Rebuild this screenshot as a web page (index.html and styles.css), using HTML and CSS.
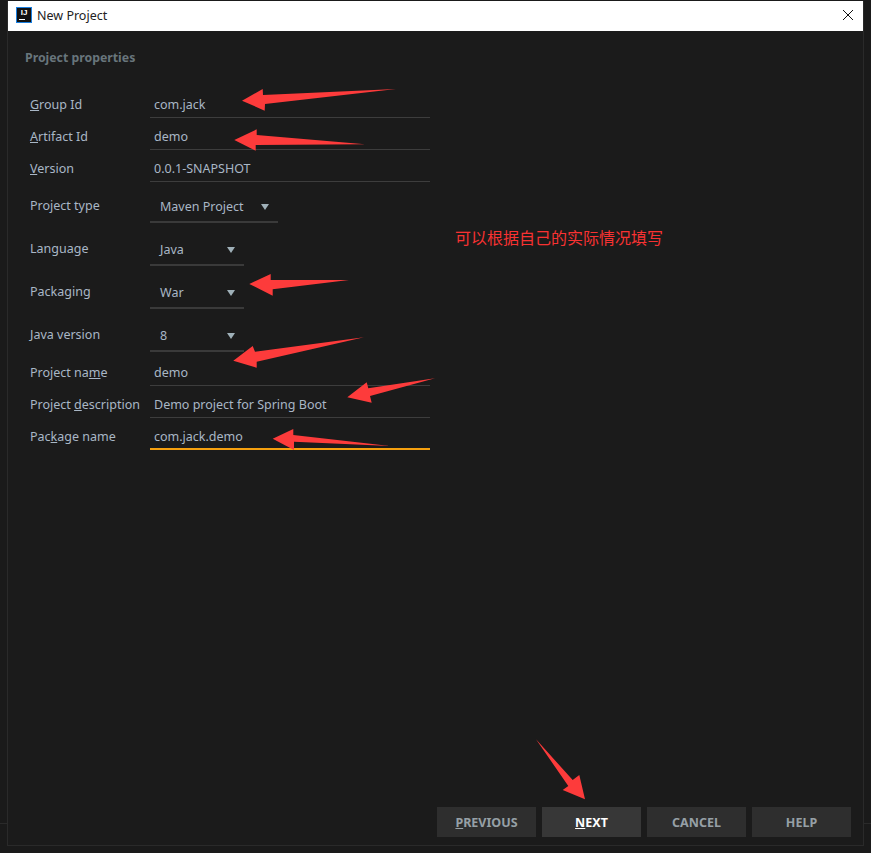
FILE: index.html
```html
<!DOCTYPE html>
<html lang="en">
<head>
  <meta charset="UTF-8">
  <title>New Project</title>
  <link rel="stylesheet" href="styles.css">
</head>
<body>
  <div class="back-line-left"></div>
  <div class="back-line-right"></div>
  <div class="dialog">
    <header class="titlebar">
      <div class="logo"><span>IJ</span><i></i></div>
      <div class="title">New Project</div>
      <svg class="close" width="12" height="12" viewBox="0 0 12 12"><path d="M1 1 L11 11 M11 1 L1 11" stroke="#111" stroke-width="1" fill="none"/></svg>
    </header>
    <div class="content">
      <h2>Project properties</h2>
      <div class="columns">
        <div class="form">
          <div class="row text">
            <label><u>G</u>roup Id</label>
            <div class="field">com.jack</div>
          </div>
          <div class="row text">
            <label><u>A</u>rtifact Id</label>
            <div class="field">demo</div>
          </div>
          <div class="row text">
            <label><u>V</u>ersion</label>
            <div class="field">0.0.1-SNAPSHOT</div>
          </div>
          <div class="row combo first-combo">
            <label>Project type</label>
            <div class="select wide">Maven Project<b></b></div>
          </div>
          <div class="row combo">
            <label>Language</label>
            <div class="select">Java<b></b></div>
          </div>
          <div class="row combo">
            <label>Packaging</label>
            <div class="select">War<b></b></div>
          </div>
          <div class="row combo">
            <label>Java version</label>
            <div class="select">8<b></b></div>
          </div>
          <div class="row text first-after-combo">
            <label>Project na<u>m</u>e</label>
            <div class="field">demo</div>
          </div>
          <div class="row text">
            <label>Project <u>d</u>escription</label>
            <div class="field">Demo project for Spring Boot</div>
          </div>
          <div class="row text">
            <label>Pac<u>k</u>age name</label>
            <div class="field active">com.jack.demo</div>
          </div>
        </div>
        <div class="note">可以根据自己的实际情况填写</div>
      </div>
      <div class="buttons">
        <button><u>P</u>REVIOUS</button>
        <button class="primary"><u>N</u>EXT</button>
        <button>CANCEL</button>
        <button>HELP</button>
      </div>
    </div>
  </div>

  <svg class="arrows" width="871" height="853" viewBox="0 0 871 853">
    <path d="M242 100.7 L262.7 89 L263 95 L396 89 L265 104 L264.7 110.7 Z"/>
    <path d="M234.3 140 L256.7 129.3 L256.7 135 L365 144.3 L255.7 145 L255.7 150.7 Z"/>
    <path d="M249.3 284 L270.7 274 L270.7 280 L349 280 L272.7 289.3 L272.7 295.7 Z"/>
    <path d="M233.3 360.7 L252.7 346 L255 351.7 L364 337.3 L256.7 361.7 L256.7 367.7 Z"/>
    <path d="M347.3 397.3 L366.7 382.3 L368.3 388.3 L435 378.3 L370 396 L371.7 402.7 Z"/>
    <path d="M272.7 438.7 L293.3 429 L293.3 435 L390 446 L294 441.7 L294 450 Z"/>
    <path d="M585 799.3 L579.3 775 L572.7 780 L536 739.3 L568.3 786 L562.7 790 Z"/>
  </svg>
</body>
</html>
```

FILE: styles.css
```css
html, body {
  margin: 0;
  height: 100%;
}
body {
  position: relative;
  width: 871px;
  height: 853px;
  overflow: hidden;
  background: #1a1a1a;
  font-family: "Noto Sans", Roboto, sans-serif;
  font-size: 12.5px;
  color: #a9b7c6;
  padding: 1px 7px 0;
  box-sizing: border-box;
}
.back-line-left, .back-line-right {
  position: absolute;
  top: 823px;
  height: 1px;
  background: #2a2a2a;
}
.back-line-left { left: 0; width: 7px; }
.back-line-right { left: 864px; width: 7px; }
.dialog {
  width: 857px;
  height: 845px;
  box-sizing: border-box;
  border: 1px solid #2a2a2a;
  border-top: 0;
  background: #1b1b1b;
  display: flex;
  flex-direction: column;
}
.titlebar {
  height: 30px;
  flex: none;
  background: #fff;
  display: flex;
  align-items: center;
  padding: 0 9px 0 8px;
  color: #222;
}
.logo {
  position: relative;
  width: 14px;
  height: 14px;
  margin-bottom: 2px;
  border: 1px solid #1a7fe0;
  background: #111;
  color: #fff;
  font: bold 8px/10px "Liberation Sans", sans-serif;
  text-align: center;
}
.logo span { display: block; }
.logo i {
  position: absolute;
  left: 2px;
  bottom: 2px;
  width: 6px;
  height: 1px;
  background: #fff;
}
.title {
  flex: 1;
  margin-left: 5px;
  margin-bottom: 1px;
  font-size: 12.5px;
}
.close { margin-bottom: 2px; }
.content {
  flex: 1;
  display: flex;
  flex-direction: column;
  padding: 0 12px 8px 17px;
}
h2 {
  margin: 19px 0 0;
  font-size: 12.3px;
  line-height: 16px;
  font-weight: bold;
  color: #68757c;
}
.columns {
  flex: 1;
  display: flex;
  margin-top: 20px;
}
.form {
  width: 400px;
  margin-left: 5px;
}
.row {
  display: flex;
}
.row.text { height: 32px; }
.row.combo { height: 43px; }
.row.first-combo { margin-top: -2px; }
.row.first-after-combo { margin-top: 2px; }
label {
  width: 120px;
  flex: none;
  line-height: 16px;
  padding-top: 11px;
}
.row.combo label { padding-top: 18px; }
.field {
  width: 280px;
  box-sizing: border-box;
  padding: 11px 4px 0;
  line-height: 16px;
  border-bottom: 1px solid #3d3d3d;
}
.field.active {
  border-bottom: 2px solid #f5a00f;
}
.select {
  position: relative;
  width: 94px;
  height: 43px;
  box-sizing: border-box;
  padding: 19px 0 0 10px;
  line-height: 16px;
  border-bottom: 2px solid #3a3a3a;
}
.select.wide { width: 128px; }
.select b {
  position: absolute;
  right: 9px;
  top: 24px;
  border-left: 4px solid transparent;
  border-right: 4px solid transparent;
  border-top: 6px solid #9fb0b8;
}
.note {
  margin: 139px 0 0 25px;
  height: 24px;
  font: 16px/24px "Noto Sans CJK SC", sans-serif;
  color: #f83232;
}
.buttons {
  display: flex;
  justify-content: flex-end;
  gap: 6px;
}
button {
  width: 99px;
  height: 30px;
  padding: 0;
  border: 0;
  background: #2e2e2e;
  color: #96a0a6;
  font: bold 12.5px "Noto Sans", sans-serif;
}
button.primary {
  background: #373737;
  color: #fff;
}
.arrows {
  position: absolute;
  left: 0;
  top: 0;
  pointer-events: none;
}
.arrows path { fill: #fd3b3b; }
```
